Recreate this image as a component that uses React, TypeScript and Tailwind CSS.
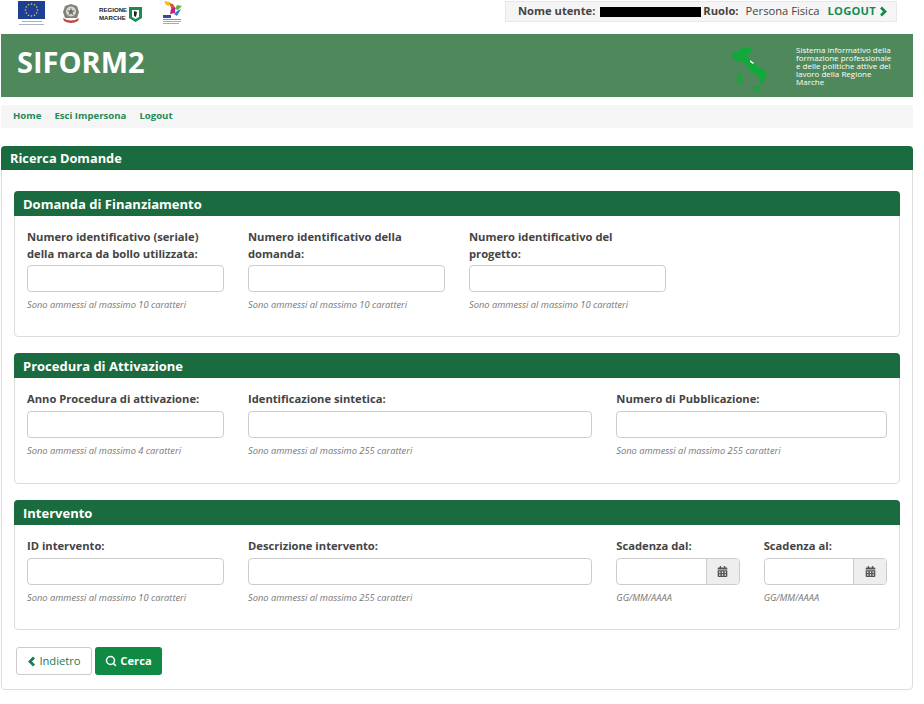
import { FaCalendarAlt } from "react-icons/fa";
import { LuSearch } from "react-icons/lu";

const sections = [
  {
    title: "Domanda di Finanziamento",
    minHeight: "min-h-[146px]",
    inputGap: "mt-[3px]",
    fields: [
      { span: "col-span-3", label: "Numero identificativo (seriale) della marca da bollo utilizzata:", hint: "Sono ammessi al massimo 10 caratteri" },
      { span: "col-span-3", label: "Numero identificativo della domanda:", hint: "Sono ammessi al massimo 10 caratteri" },
      { span: "col-span-3", label: "Numero identificativo del progetto:", hint: "Sono ammessi al massimo 10 caratteri" },
    ],
  },
  {
    title: "Procedura di Attivazione",
    minHeight: "min-h-[131px]",
    inputGap: "mt-[4px]",
    fields: [
      { span: "col-span-3", label: "Anno Procedura di attivazione:", hint: "Sono ammessi al massimo 4 caratteri" },
      { span: "col-span-5", label: "Identificazione sintetica:", hint: "Sono ammessi al massimo 255 caratteri" },
      { span: "col-span-4", label: "Numero di Pubblicazione:", hint: "Sono ammessi al massimo 255 caratteri" },
    ],
  },
  {
    title: "Intervento",
    minHeight: "min-h-[130px]",
    inputGap: "mt-[4px]",
    fields: [
      { span: "col-span-3", label: "ID intervento:", hint: "Sono ammessi al massimo 10 caratteri" },
      { span: "col-span-5", label: "Descrizione intervento:", hint: "Sono ammessi al massimo 255 caratteri" },
      { span: "col-span-2", label: "Scadenza dal:", hint: "GG/MM/AAAA", date: true },
      { span: "col-span-2", label: "Scadenza al:", hint: "GG/MM/AAAA", date: true },
    ],
  },
];

function EuFlag() {
  const stars = Array.from({ length: 12 }, (_, i) => {
    const a = (i * Math.PI) / 6;
    return <circle key={i} cx={13.5 + Math.cos(a) * 6} cy={9 + Math.sin(a) * 6} r="0.8" fill="#d8cf5a" />;
  });
  return (
    <div className="flex w-[27px] flex-col items-center">
      <svg width="27" height="18" viewBox="0 0 27 18">
        <rect width="27" height="18" fill="#1f3f94" />
        {stars}
      </svg>
      <div className="mt-[2px] h-[1px] w-[20px] bg-[#aab2c2]" />
      <div className="mt-[2px] h-[1px] w-[25px] bg-[#aab2c2]" />
    </div>
  );
}

function Emblem() {
  return (
    <svg width="18" height="21" viewBox="0 0 18 21">
      <path d="M9 1 L15 3 L17 9 L15 15 L3 15 L1 9 L3 3 Z" fill="#7f837a" />
      <circle cx="9" cy="8.5" r="5" fill="#d8d8d0" />
      <path d="M9 4.5 L10 7.5 L13 7.5 L10.5 9.5 L11.5 12.5 L9 10.5 L6.5 12.5 L7.5 9.5 L5 7.5 L8 7.5 Z" fill="#6b7068" />
      <path d="M1 15 Q9 20 17 15 L16 18 Q9 22 2 18 Z" fill="#b84a4a" />
    </svg>
  );
}

function MarcheLogo() {
  return (
    <div className="flex w-[43px] items-center justify-between">
      <div className="text-[6.1px] leading-[8px] font-bold text-[#222] [font-family:'Liberation_Sans',sans-serif]">
        REGIONE
        <br />
        MARCHE
      </div>
      <svg width="13" height="15" viewBox="0 0 13 15">
        <path d="M0 0 H13 V11 L6.5 15 L0 11 Z" fill="#1c8a4c" />
        <path d="M3 3 H10 V10 L6.5 12 L3 10 Z" fill="#fff" />
        <path d="M5 4 L8 5 L7 10 L5 9 Z" fill="#222" />
      </svg>
    </div>
  );
}

function FseLogo() {
  return (
    <svg width="20" height="25" viewBox="0 0 20 25">
      <path d="M1 0 L7 1 L6 5 L3 4 Z" fill="#f0c020" />
      <path d="M6 2 L10 3 L13 8 L9 9 Z" fill="#e2502c" />
      <path d="M8 8 L12 6 L12 12 L7 13 Z" fill="#c0208a" />
      <path d="M14 4 L19 5 L15 9 L12 8 Z" fill="#5fb548" />
      <path d="M14 10 L18 8 L14 15 L11 13 Z" fill="#2f7fd0" />
      <rect x="0" y="14" width="8" height="3" fill="#2f4f9a" />
      <rect x="0" y="18" width="18" height="1" fill="#8f96a8" />
      <rect x="0" y="20" width="18" height="1" fill="#a4aab8" />
      <rect x="0" y="22" width="16" height="1" fill="#a4aab8" />
    </svg>
  );
}

function ItalyMap() {
  return (
    <svg width="42" height="48" viewBox="0 0 42 48" className="mt-[7px]">
      <path d="M2 8 L8 6 L12 3 L20 2 L22 6 L18 9 L19 14 L26 20 L32 24 L37 28 L35 34 L33 38 L31 40 L30 34 L26 30 L20 26 L16 20 L12 16 L6 16 L3 13 Z" fill="#12a83c" />
      <path d="M20 15 L24 18 L23 19 L20 17 Z" fill="#f4f8f0" />
      <path d="M7 28 L11 28 L11 38 L7 38 Z" fill="#12a83c" />
      <path d="M22 42 L30 41 L29 46 L26 46 Z" fill="#12a83c" />
    </svg>
  );
}

function Chevron({ left }: { left?: boolean }) {
  return (
    <svg width="9" height="11" viewBox="0 0 9 11" className="shrink-0">
      <polyline
        points={left ? "7,1.5 3,5.5 7,9.5" : "2,1.5 6,5.5 2,9.5"}
        fill="none"
        stroke="currentColor"
        strokeWidth="2.8"
      />
    </svg>
  );
}

function Field({ label, hint, date, inputGap }: { label: string; hint: string; date?: boolean; inputGap: string }) {
  return (
    <div className="flex flex-col">
      <label className="flex-1 text-[11.2px] leading-[17px] font-bold text-[#444]">{label}</label>
      {date ? (
        <div className={`${inputGap} flex h-[27px] rounded-[4px] border border-[#ccc] bg-white`}>
          <div className="flex-1" />
          <span className="flex w-[33px] items-center justify-center rounded-r-[3px] border-l border-[#ccc] bg-[#eee] text-[#555]">
            <FaCalendarAlt className="h-[11px] w-[11px]" />
          </span>
        </div>
      ) : (
        <input type="text" className={`${inputGap} h-[27px] w-full rounded-[4px] border border-[#ccc] bg-white`} />
      )}
      <p className="mt-[6px] text-[9.3px] leading-[14px] text-[#777] italic">{hint}</p>
    </div>
  );
}

export default function App() {
  return (
    <div className="min-h-[704px] w-[913px] bg-white pb-[14px] font-['Open_Sans',sans-serif] text-[#444]">
      {/* loghi e utente */}
      <div className="flex h-[34px] items-start justify-between pr-[16px]">
        <div className="flex items-start pt-[1px] pl-[18px]">
          <EuFlag />
          <div className="mt-[2px] ml-[17px]">
            <Emblem />
          </div>
          <div className="mt-[5px] ml-[19px]">
            <MarcheLogo />
          </div>
          <div className="ml-[21px]">
            <FseLogo />
          </div>
        </div>
        <div className="mt-[1px] flex h-[21px] w-[392px] items-center border border-[#e8e8e8] bg-[#f5f5f5] pl-[12px] text-[11.2px]">
          <b className="font-bold">Nome utente:</b>
          <span className="ml-[5px] h-[10px] w-[101px] bg-black" />
          <b className="ml-[2px] font-bold">Ruolo:</b>
          <span className="ml-[7px]">Persona Fisica</span>
          <a className="ml-[8px] flex items-center font-bold tracking-[0.2px] text-[#158a52]">
            LOGOUT
            <span className="ml-[3px] flex">
              <Chevron />
            </span>
          </a>
        </div>
      </div>

      {/* testata */}
      <header className="ml-[1px] flex h-[63px] items-center justify-between bg-[#4f895b] pr-[19px] pl-[16px]">
        <h1 className="-mt-[7px] text-[29px] font-bold text-white">SIFORM2</h1>
        <div className="flex items-center">
          <ItalyMap />
          <p className="ml-[24px] w-[98px] text-[8px] leading-[8px] text-white">
            Sistema informativo della formazione professionale e delle politiche attive del lavoro della Regione Marche
          </p>
        </div>
      </header>

      <nav className="mt-[8px] ml-[1px] flex h-[23px] items-center gap-[13px] rounded-[3px] bg-[#f5f5f5] pl-[12px] text-[9.6px] font-bold text-[#1f8a5a]">
        <a>Home</a>
        <a>Esci Impersona</a>
        <a>Logout</a>
      </nav>

      {/* pannello ricerca */}
      <main className="mt-[18px] ml-[1px] rounded-[4px] border border-[#ddd] bg-white">
        <h2 className="-mx-[1px] -mt-[1px] flex h-[24px] items-center rounded-t-[4px] bg-[#1a6b3f] pt-[1px] pl-[9px] text-[12.8px] font-bold text-white">
          Ricerca Domande
        </h2>
        <div className="flex flex-col gap-[16px] px-[12px] pt-[21px]">
          {sections.map((s) => (
            <section key={s.title} className={`rounded-[4px] border border-[#ddd] ${s.minHeight}`}>
              <h3 className="-mx-[1px] -mt-[1px] flex h-[25px] items-center rounded-t-[4px] bg-[#1a6b3f] pt-[2px] pl-[9px] text-[13px] font-bold text-white">
                {s.title}
              </h3>
              <div className="grid grid-cols-12 gap-x-6 px-[12px] pt-[12px]">
                {s.fields.map((f) => (
                  <div key={f.label} className={f.span}>
                    <Field label={f.label} hint={f.hint} date={"date" in f ? f.date : false} inputGap={s.inputGap} />
                  </div>
                ))}
              </div>
            </section>
          ))}
        </div>
        <div className="flex gap-[3px] px-[14px] pt-[17px] pb-[14px]">
          <button className="flex h-[28px] w-[76px] items-center justify-center rounded-[3px] border border-[#ccc] bg-white text-[11.2px] text-[#1a7a50]">
            <span className="mr-[3px] flex">
              <Chevron left />
            </span>
            Indietro
          </button>
          <button className="flex h-[28px] w-[67px] items-center justify-center rounded-[3px] bg-[#0f8a44] text-[11.2px] font-bold text-white">
            <LuSearch className="mr-[3px] h-[12px] w-[12px]" strokeWidth={3} />
            Cerca
          </button>
        </div>
      </main>
    </div>
  );
}
